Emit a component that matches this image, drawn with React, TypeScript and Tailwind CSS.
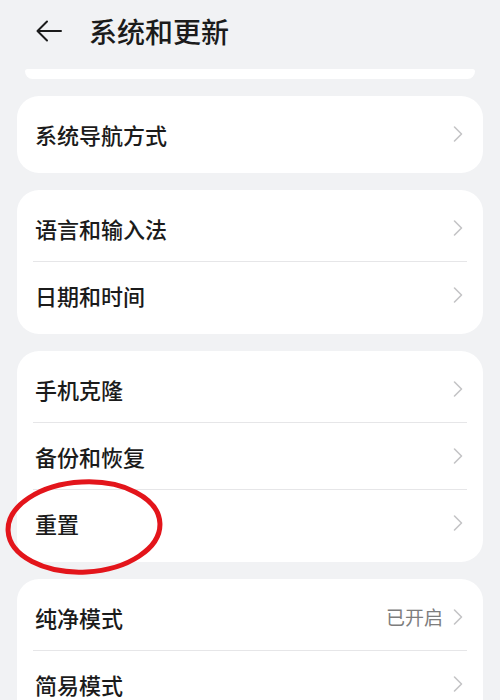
import React from 'react'

type Row = { label: string; value?: string }

const GROUPS: Row[][] = [
  [{ label: '系统导航方式' }],
  [{ label: '语言和输入法' }, { label: '日期和时间' }],
  [{ label: '手机克隆' }, { label: '备份和恢复' }, { label: '重置' }],
  [{ label: '纯净模式', value: '已开启' }, { label: '简易模式' }],
]

function Chevron() {
  return (
    <svg width="10" height="18" viewBox="0 0 10 18" fill="none" className="shrink-0">
      <path d="M1.5 2 L8.5 9 L1.5 16" stroke="#c4c4c6" strokeWidth="1.6" strokeLinecap="round" strokeLinejoin="round" />
    </svg>
  )
}

function Card({ rows }: { rows: Row[] }) {
  return (
    <div className="mx-[17px] mb-[17px] rounded-[22px] bg-white pb-[6px] pt-[5px]">
      {rows.map((r, i) => (
        <div key={r.label}>
          {i > 0 && <div className="mx-[16px] h-px bg-[#e6e6e8]" />}
          <div className="flex h-[66px] items-center pl-[18px] pr-[20px]">
            <span className="flex-1 text-[22px] font-medium text-[#1b1b1b]">{r.label}</span>
            {r.value && <span className="mr-[10px] text-[19px] text-[#7d7d7d]">{r.value}</span>}
            <Chevron />
          </div>
        </div>
      ))}
    </div>
  )
}

export default function App() {
  return (
    <div
      className="relative h-[700px] w-[500px] overflow-hidden bg-[#f1f2f4]"
      style={{ fontFamily: '"Noto Sans CJK SC", "Noto Sans", sans-serif' }}
    >
      {/* header */}
      <div className="flex h-[62px] items-center pl-[35px]">
        <svg width="28" height="24" viewBox="0 0 28 24" fill="none">
          <path d="M26 12 H3 M12 2.5 L2.5 12 L12 21.5" stroke="#1b1b1b" strokeWidth="2" strokeLinecap="round" strokeLinejoin="round" />
        </svg>
        <h1 className="ml-[26px] text-[28px] font-medium leading-none text-[#1b1b1b]">系统和更新</h1>
      </div>

      {/* bottom edge of the card scrolled up under the header */}
      <div className="mx-[25px] mt-[7px] h-[10px] rounded-b-[18px] rounded-t-[6px] bg-white" />

      <div className="mt-[17px]">
        {GROUPS.map((g, i) => (
          <Card key={i} rows={g} />
        ))}
      </div>

      {/* red annotation circle around 重置 */}
      <svg className="pointer-events-none absolute left-0 top-[476px]" width="170" height="102" viewBox="0 0 170 102">
        <ellipse cx="84" cy="51" rx="76" ry="45" fill="none" stroke="#e3151b" strokeWidth="5" transform="rotate(-3 84 51)" />
      </svg>
    </div>
  )
}
